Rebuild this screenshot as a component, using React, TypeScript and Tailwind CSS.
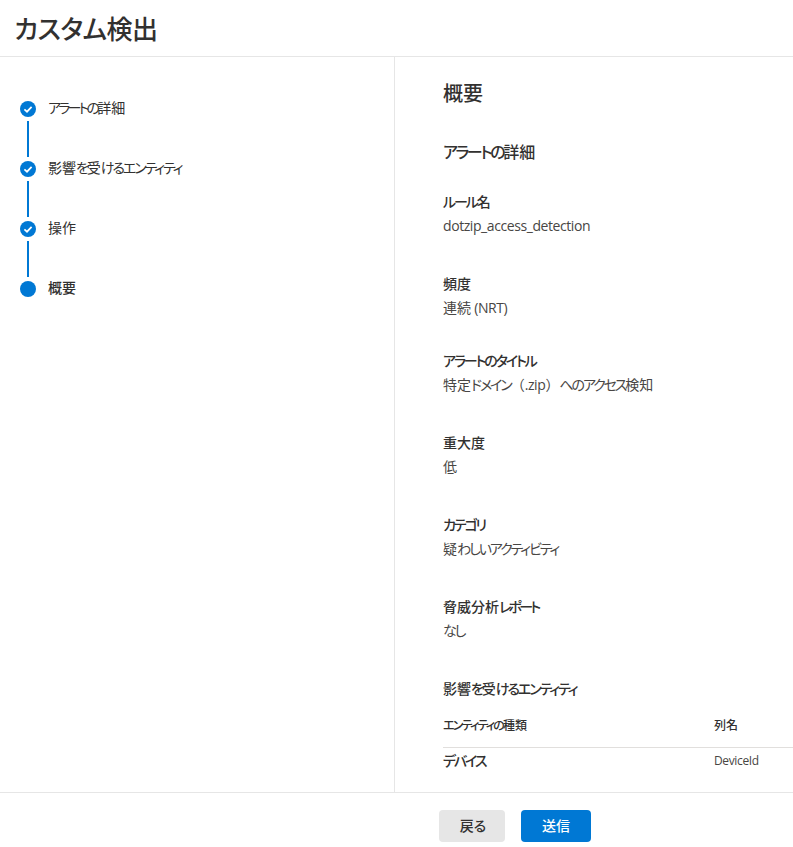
import React from "react";

const font = "[font-family:'Open_Sans','Noto_Sans_CJK_JP',sans-serif]";

// Kana in the reference's face are narrower than in Noto: tighten only those runs.
function T({ children, tight }: { children: string; tight?: boolean }) {
  const parts = children.split(/([\u3040-\u30ff]+|[\x20-\x7e]+)/).filter(Boolean);
  return (
    <>
      {parts.map((p, i) =>
        /^[\u3040-\u30ff]/.test(p) ? (
          <span key={i} className={tight ? "[font-feature-settings:'palt'] tracking-[-0.2em]" : "[font-feature-settings:'palt'] tracking-[-0.15em]"}>{p}</span>
        ) : /^[\x20-\x7e]/.test(p) ? (
          <span key={i} className="tracking-[-0.03em]">{p}</span>
        ) : (
          <span key={i}>{p}</span>
        )
      )}
    </>
  );
}

function Check() {
  return (
    <svg viewBox="0 0 16 16" className="w-4 h-4" fill="none">
      <circle cx="8" cy="8" r="8" fill="#0078d4" />
      <path d="M4.4 8.3 L7 10.7 L11.6 5.8" stroke="#fff" strokeWidth="1.7" fill="none" />
    </svg>
  );
}

function Step({ label, done, last, bold, tight }: { label: string; done?: boolean; last?: boolean; bold?: boolean; tight?: boolean }) {
  return (
    <div className="flex h-[60px] gap-3">
      <div className="flex flex-col items-center w-4 shrink-0">
        {done ? <Check /> : <div className="w-4 h-4 rounded-full bg-[#0078d4]" />}
        {!last && <div className="w-[2px] h-9 mt-1 bg-[#0078d4]" />}
      </div>
      <div className={`text-sm leading-[14px] text-[#323130] ${bold ? "font-medium" : ""}`}><T tight={tight}>{label}</T></div>
    </div>
  );
}

function Field({ label, value, h, tight }: { label: string; value: string; h: string; tight?: boolean }) {
  return (
    <div className={h}>
      <div className="text-sm font-medium leading-5 text-[#323130]"><T tight={tight}>{label}</T></div>
      <div className="text-sm leading-5 mt-1 text-[#484644]"><T>{value}</T></div>
    </div>
  );
}

export default function App() {
  return (
    <div className={`${font} w-[793px] h-[847px] bg-white flex flex-col overflow-hidden`}>
      <header className="h-[57px] shrink-0 border-b border-[#e6e6e6] pl-[14px] pt-[9px]">
        <h1 className="text-[26px] leading-[40px] font-medium text-[#323130] [font-feature-settings:'palt'] tracking-[-0.02em]">カスタム検出</h1>
      </header>
      <div className="flex h-[735px] shrink-0 overflow-hidden">
        <aside className="w-[395px] shrink-0 border-r border-[#e6e6e6] pl-5 pt-11">
          <Step label="アラートの詳細" done tight />
          <Step label="影響を受けるエンティティ" done />
          <Step label="操作" done />
          <Step label="概要" last bold />
        </aside>
        <main className="flex-1 pl-[48px] pt-[22px] min-w-0">
          <h2 className="text-xl leading-[30px] font-medium text-[#323130]">概要</h2>
          <h3 className="mt-[33px] mb-[30px] text-base leading-5 font-medium text-[#323130]"><T>アラートの詳細</T></h3>
          <Field label="ルール名" value="dotzip_access_detection" h="h-[82px]" />
          <Field label="頻度" value="連続 (NRT)" h="h-[77px]" />
          <Field label="アラートのタイトル" value="特定ドメイン（.zip）へのアクセス検知" h="h-[82px]" />
          <Field label="重大度" value="低" h="h-[82px]" />
          <Field label="カテゴリ" value="疑わしいアクティビティ" h="h-[82px]" />
          <Field label="脅威分析レポート" value="なし" h="h-[82px]" tight />
          <h3 className="text-sm leading-5 font-medium text-[#323130]"><T>影響を受けるエンティティ</T></h3>
          <div className="mt-[5px] flex items-center h-[44px] border-b border-[#e1dfdd] text-xs font-medium text-[#323130]">
            <div className="w-[271px]"><T>エンティティの種類</T></div>
            <div>列名</div>
          </div>
          <div className="flex items-center h-[26px]">
            <div className="w-[271px] text-sm font-medium text-[#323130]"><T>デバイス</T></div>
            <div className="text-xs text-[#484644]"><T>DeviceId</T></div>
          </div>
        </main>
      </div>
      <footer className="flex-1 border-t border-[#e6e6e6] flex items-start gap-4 pl-[439px] pt-[17px]">
        <button className="w-[66px] h-8 rounded-sm bg-[#e6e6e6] text-sm font-medium text-[#323130]"><T>戻る</T></button>
        <button className="w-[70px] h-8 rounded-sm bg-[#0078d4] text-sm font-medium text-white">送信</button>
      </footer>
    </div>
  );
}
